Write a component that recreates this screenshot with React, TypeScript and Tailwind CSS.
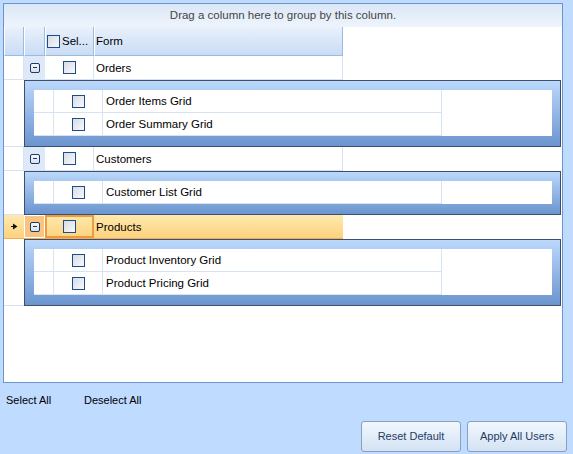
import React from 'react'

interface FormGroup {
  name: string
  items: string[]
  focused?: boolean
}

const groups: FormGroup[] = [
  { name: 'Orders', items: ['Order Items Grid', 'Order Summary Grid'] },
  { name: 'Customers', items: ['Customer List Grid'] },
  { name: 'Products', items: ['Product Inventory Grid', 'Product Pricing Grid'], focused: true },
]

function Check() {
  return <span className="block w-[13px] h-[13px] border border-[#1f4b87] bg-linear-to-br from-[#d6dce6] to-[#f8f9fb]" />
}

function ExpandButton() {
  return (
    <span className="flex items-center justify-center w-[10px] h-[10px] rounded-[2px] border border-[#1f3a63] bg-linear-to-b from-[#f4f7fb] to-[#d9e2ee]">
      <span className="block w-[4px] h-[1px] bg-[#1f3a63]" />
    </span>
  )
}

function HeaderCell({ className, children }: { className: string; children?: React.ReactNode }) {
  return (
    <div className={`h-full flex items-center border-l border-l-white border-r border-b border-r-[#9bbbe3] border-b-[#9bbbe3] bg-linear-to-b from-[#e9f1fc] to-[#c9dcf5] ${className}`}>
      {children}
    </div>
  )
}

function MasterRow({ g }: { g: FormGroup }) {
  if (g.focused) {
    return (
      <div className="flex h-[24px]">
        <div className="flex w-[339px] border-b border-[#f2ad55] bg-linear-to-b from-[#ffe9ad] to-[#fcd27d]">
          <div className="w-[20px] flex items-center justify-center">
            <svg width="7" height="7" viewBox="0 0 7 7">
              <path d="M0 3h2V0.5L6.5 3.5 2 6.5V4H0z" fill="#111" />
            </svg>
          </div>
          <div className="w-[21px] border border-white bg-[#f8c47f] flex items-center justify-center">
            <ExpandButton />
          </div>
          <div className="w-[49px] border-2 border-[#ef9a3c] flex items-center justify-center">
            <Check />
          </div>
          <div className="flex-1 flex items-center pl-[2px] pt-[2px] text-black">{g.name}</div>
        </div>
      </div>
    )
  }
  return (
    <div className="flex h-[24px]">
      <div className="w-[20px] border-r border-b border-[#d5e3f5]" />
      <div className="w-[21px] bg-[#dde8f8] border-b border-[#d5e3f5] flex items-center justify-center">
        <ExpandButton />
      </div>
      <div className="w-[49px] border-r border-b border-[#d5e3f5] flex items-center justify-center">
        <Check />
      </div>
      <div className="w-[249px] border-r border-b border-[#d5e3f5] flex items-center pl-[2px] pt-[2px] text-black">{g.name}</div>
    </div>
  )
}

function DetailBlock({ items }: { items: string[] }) {
  return (
    <div className="flex">
      <div className="w-[20px] border-b border-[#d5e3f5]" />
      <div className="w-[537px] border border-[#3d4e6e] bg-linear-to-b from-[#bcd8fb] to-[#6b95cf] pt-[9px] pl-[9px] pr-[8px] pb-[10px]">
        <div className="bg-white flex flex-col">
          {items.map(item => (
            <div key={item} className="flex h-[23px]">
              <div className="w-[20px] border-r border-b border-[#d5e3f5]" />
              <div className="w-[49px] border-r border-b border-[#d5e3f5] flex items-center justify-center">
                <Check />
              </div>
              <div className="w-[339px] border-r border-b border-[#d5e3f5] flex items-center pl-[3px] pt-[2px] text-black">{item}</div>
            </div>
          ))}
        </div>
      </div>
    </div>
  )
}

export default function App() {
  return (
    <div
      className="w-[573px] h-[454px] bg-[#bfdbff] flex flex-col text-[11.5px] leading-none overflow-hidden"
      style={{ fontFamily: '"Liberation Sans", Arial, sans-serif' }}
    >
      <div className="ml-[3px] mt-[3px] w-[560px] h-[380px] border border-[#6b95cc] bg-white flex flex-col">
        {/* group panel */}
        <div className="h-[23px] flex items-center justify-center pt-[1px] bg-linear-to-b from-[#dbe7f7] to-[#eef4fc] text-[#454545]">
          Drag a column here to group by this column.
        </div>

        {/* column headers */}
        <div className="flex h-[29px]">
          <HeaderCell className="w-[20px]" />
          <HeaderCell className="w-[21px]" />
          <HeaderCell className="w-[49px] pl-[1px] gap-[2px]">
            <Check />
            <span className="text-black pt-[2px]">Sel...</span>
          </HeaderCell>
          <HeaderCell className="w-[249px] pl-[1px]">
            <span className="text-black pt-[2px]">Form</span>
          </HeaderCell>
        </div>

        {groups.map(g => (
          <React.Fragment key={g.name}>
            <MasterRow g={g} />
            <DetailBlock items={g.items} />
          </React.Fragment>
        ))}
        <div className="flex-1" />
      </div>

      <div className="flex mt-[12px] pl-[6px] text-black text-[11px]">
        <span className="w-[78px]">Select All</span>
        <span>Deselect All</span>
      </div>

      <div className="mt-auto mb-[2px] mr-[6px] flex justify-end gap-[6px]">
        {['Reset Default', 'Apply All Users'].map(label => (
          <button
            key={label}
            className="w-[100px] h-[31px] rounded-[3px] border border-[#8a9fbf] bg-linear-to-b from-[#f2f7fd] via-[#e3edf9] to-[#d3e2f4] text-[#1e3c64] text-[11px]"
          >
            {label}
          </button>
        ))}
      </div>
    </div>
  )
}
